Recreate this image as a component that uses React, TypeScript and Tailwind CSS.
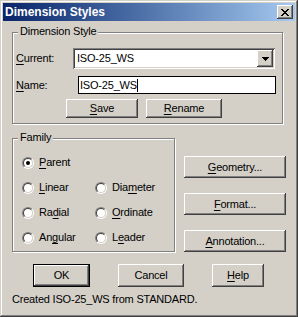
import React from "react";

const RAISED =
  "shadow-[inset_-1px_-1px_#404040,inset_1px_1px_#ffffff,inset_-2px_-2px_#808080,inset_2px_2px_#d4d0c8]";

function U({ children }: { children: React.ReactNode }) {
  return <span className="underline decoration-1 underline-offset-[2px]">{children}</span>;
}

function Btn({
  className = "",
  children,
  def = false,
}: {
  className?: string;
  children: React.ReactNode;
  def?: boolean;
}) {
  if (def) {
    return (
      <div className={`border border-black bg-[#d4d0c8] ${className}`}>
        <div className={`w-full h-full flex items-center justify-center ${RAISED}`}>{children}</div>
      </div>
    );
  }
  return (
    <div className={`flex items-center justify-center bg-[#d4d0c8] ${RAISED} ${className}`}>{children}</div>
  );
}

function Radio({ checked = false }: { checked?: boolean }) {
  return (
    <span className="w-[12px] h-[12px] rounded-full border border-t-[#808080] border-l-[#808080] border-r-white border-b-white flex items-center justify-center shrink-0">
      <span className="w-[10px] h-[10px] rounded-full border border-t-[#404040] border-l-[#404040] border-r-[#d4d0c8] border-b-[#d4d0c8] bg-white flex items-center justify-center">
        {checked && <span className="w-[4px] h-[4px] rounded-full bg-black" />}
      </span>
    </span>
  );
}

function RadioItem({
  checked,
  children,
  className = "",
}: {
  checked?: boolean;
  children: React.ReactNode;
  className?: string;
}) {
  return (
    <div className={`flex items-center gap-[5px] ${className}`}>
      <Radio checked={checked} />
      <span>{children}</span>
    </div>
  );
}

function CloseIcon() {
  const px: [number, number][] = [
    [0, 0], [1, 0], [6, 0], [7, 0],
    [1, 1], [2, 1], [5, 1], [6, 1],
    [2, 2], [3, 2], [4, 2], [5, 2],
    [3, 3], [4, 3],
    [2, 4], [3, 4], [4, 4], [5, 4],
    [1, 5], [2, 5], [5, 5], [6, 5],
    [0, 6], [1, 6], [6, 6], [7, 6],
  ];
  return (
    <svg width="8" height="7" viewBox="0 0 8 7" shapeRendering="crispEdges">
      {px.map(([x, y], i) => (
        <rect key={i} x={x} y={y} width="1" height="1" fill="#000" />
      ))}
    </svg>
  );
}

function ArrowIcon() {
  return (
    <svg width="7" height="4" viewBox="0 0 7 4" shapeRendering="crispEdges">
      <rect x="0" y="0" width="7" height="1" fill="#000" />
      <rect x="1" y="1" width="5" height="1" fill="#000" />
      <rect x="2" y="2" width="3" height="1" fill="#000" />
      <rect x="3" y="3" width="1" height="1" fill="#000" />
    </svg>
  );
}

export default function App() {
  return (
    <div className="w-[298px] h-[317px] bg-[#d4d0c8] p-[3px] shadow-[inset_-1px_-1px_#404040,inset_1px_1px_#d4d0c8,inset_-2px_-2px_#808080,inset_2px_2px_#ffffff] font-['Liberation_Sans',Arial,sans-serif] text-[11px] leading-[13px] text-black">
      {/* Title bar */}
      <div className="h-[18px] flex items-center justify-between bg-linear-to-r from-[#0a246a] to-[#a6caf0] pl-[2px] pr-[2px]">
        <span className="text-white font-bold text-[12px] leading-[14px]">Dimension Styles</span>
        <div className={`w-[16px] h-[14px] flex items-center justify-center bg-[#d4d0c8] ${RAISED}`}>
          <CloseIcon />
        </div>
      </div>

      <div className="px-[9px] flex flex-col tracking-[-0.2px]">
        {/* Dimension Style group */}
        <div className="relative mt-[11px] w-[271px] h-[92px] border border-[#808080] shadow-[1px_1px_0_#ffffff,inset_1px_1px_0_#ffffff]">
          <span className="absolute left-[5px] top-[-8px] bg-[#d4d0c8] px-[2px]">Dimension Style</span>
          <div className="pl-[3px] pt-[15px] flex flex-col">
            <div className="flex items-center h-[21px]">
              <span className="w-[57px]">
                <U>C</U>urrent:
              </span>
              <div className="w-[202px] h-[21px] bg-white flex items-center justify-between p-[2px] shadow-[inset_1px_1px_#808080,inset_-1px_-1px_#ffffff,inset_2px_2px_#404040,inset_-2px_-2px_#d4d0c8]">
                <span className="pl-[2px]">ISO-25_WS</span>
                <div className={`w-[16px] h-[17px] flex items-center justify-center bg-[#d4d0c8] ${RAISED}`}>
                  <ArrowIcon />
                </div>
              </div>
            </div>
            <div className="flex items-center h-[18px] mt-[7px]">
              <span className="w-[62px]">
                <U>N</U>ame:
              </span>
              <div className="w-[198px] h-[18px] bg-white border border-black flex items-center pl-[1px]">
                <span>ISO-25_WS</span>
                <span className="w-[1px] h-[13px] bg-black" />
              </div>
            </div>
            <div className="flex mt-[5px] ml-[50px] gap-[8px]">
              <Btn className="w-[72px] h-[19px]">
                <span>
                  <U>S</U>ave
                </span>
              </Btn>
              <Btn className="w-[76px] h-[19px]">
                <span>
                  <U>R</U>ename
                </span>
              </Btn>
            </div>
          </div>
        </div>

        {/* Family + side buttons */}
        <div className="flex items-start mt-[14px]">
          <div className="relative w-[164px] h-[114px] border border-[#808080] shadow-[1px_1px_0_#ffffff,inset_1px_1px_0_#ffffff]">
            <span className="absolute left-[5px] top-[-8px] bg-[#d4d0c8] px-[2px]">Family</span>
            <div className="pl-[9px] pt-[11px] flex flex-col">
              <div className="h-[25px] flex items-center">
                <RadioItem checked>
                  <U>P</U>arent
                </RadioItem>
              </div>
              <div className="h-[25px] flex items-center">
                <RadioItem className="w-[73px]">
                  <U>L</U>inear
                </RadioItem>
                <RadioItem>
                  Dia<U>m</U>eter
                </RadioItem>
              </div>
              <div className="h-[25px] flex items-center">
                <RadioItem className="w-[73px]">
                  Ra<U>d</U>ial
                </RadioItem>
                <RadioItem>
                  <U>O</U>rdinate
                </RadioItem>
              </div>
              <div className="h-[25px] flex items-center">
                <RadioItem className="w-[73px]">
                  An<U>g</U>ular
                </RadioItem>
                <RadioItem>
                  L<U>e</U>ader
                </RadioItem>
              </div>
            </div>
          </div>
          <div className="ml-[9px] mt-[18px] flex flex-col gap-[15px]">
            <Btn className="w-[102px] h-[22px]">
              <span>
                <U>G</U>eometry...
              </span>
            </Btn>
            <Btn className="w-[102px] h-[22px]">
              <span>
                <U>F</U>ormat...
              </span>
            </Btn>
            <Btn className="w-[102px] h-[22px]">
              <span>
                <U>A</U>nnotation...
              </span>
            </Btn>
          </div>
        </div>

        {/* Bottom buttons */}
        <div className="flex mt-[12px] ml-[21px]">
          <Btn def className="w-[57px] h-[23px]">
            <span>OK</span>
          </Btn>
          <Btn className="w-[66px] h-[23px] ml-[28px]">
            <span>Cancel</span>
          </Btn>
          <Btn className="w-[52px] h-[23px] ml-[28px]">
            <span>
              <U>H</U>elp
            </span>
          </Btn>
        </div>

        <div className="mt-[6px]">Created ISO-25_WS from STANDARD.</div>
      </div>
    </div>
  );
}
